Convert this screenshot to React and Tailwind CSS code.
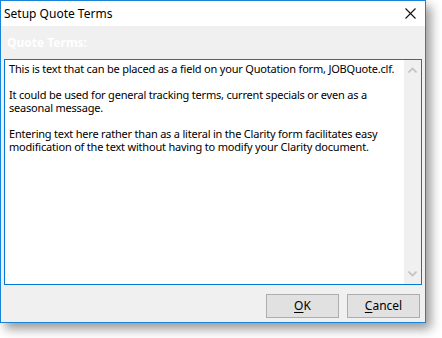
import React from "react";

const QUOTE_TERMS = [
  "This is text that can be placed as a field on your Quotation form, JOBQuote.clf.",
  "",
  "It could be used for general tracking terms, current specials or even as a seasonal message.",
  "",
  "Entering text here rather than as a literal in the Clarity form facilitates easy modification of the text without having to modify your Clarity document.",
];

const Chevron = ({ up }) => (
  <svg width="9" height="6" viewBox="0 0 9 6" className="text-[#c2c2c2]">
    <path
      d={up ? "M0.5 5.5 L4.5 1.5 L8.5 5.5" : "M0.5 0.5 L4.5 4.5 L8.5 0.5"}
      fill="none"
      stroke="currentColor"
      strokeWidth="1.6"
    />
  </svg>
);

const DialogButton = ({ mnemonic, rest }) => (
  <button className="w-[73px] h-[24px] border border-[#adadad] bg-[#e1e1e1] text-[12px] text-black leading-none">
    <span className="underline underline-offset-2">{mnemonic}</span>
    {rest}
  </button>
);

export default function App() {
  return (
    <div
      className="w-[442px] h-[338px] bg-white overflow-hidden"
      style={{ fontFamily: "'Noto Sans', 'Open Sans', sans-serif" }}
    >
      <div className="w-[426px] h-[323px] border border-[#1883d7] flex flex-col shadow-[5px_6px_10px_rgba(0,0,0,0.4)]">
        {/* Title bar */}
        <div className="h-[25px] bg-white flex items-center justify-between pl-[3px] pr-[9px]">
          <span className="text-[12px] text-black">Setup Quote Terms</span>
          <svg width="11" height="11" viewBox="0 0 11 11">
            <path d="M0.5 0.5 L10.5 10.5 M10.5 0.5 L0.5 10.5" stroke="#111" strokeWidth="1.1" />
          </svg>
        </div>

        {/* Body */}
        <div className="flex-1 bg-[#f0f0f0] flex flex-col px-[3px] pb-[4px]">
          <div className="h-[33px] flex items-center pl-[3px] text-[12px] font-bold text-white">
            Quote Terms:
          </div>

          <div className="h-[226px] border border-[#0078d7] bg-white flex">
            <div className="flex-1 pl-[4px] pt-[2px] text-[11px] leading-[13px] tracking-[-0.2px] text-black">
              {QUOTE_TERMS.map((line, i) =>
                line ? <p key={i}>{line}</p> : <p key={i} className="h-[13px]" />
              )}
            </div>
            <div className="w-[17px] bg-[#f0f0f0] flex flex-col items-center justify-between py-[7px]">
              <Chevron up />
              <Chevron />
            </div>
          </div>

          <div className="flex-1 flex items-end justify-end gap-[8px] pr-[2px]">
            <DialogButton mnemonic="O" rest="K" />
            <DialogButton mnemonic="C" rest="ancel" />
          </div>
        </div>
      </div>
    </div>
  );
}
